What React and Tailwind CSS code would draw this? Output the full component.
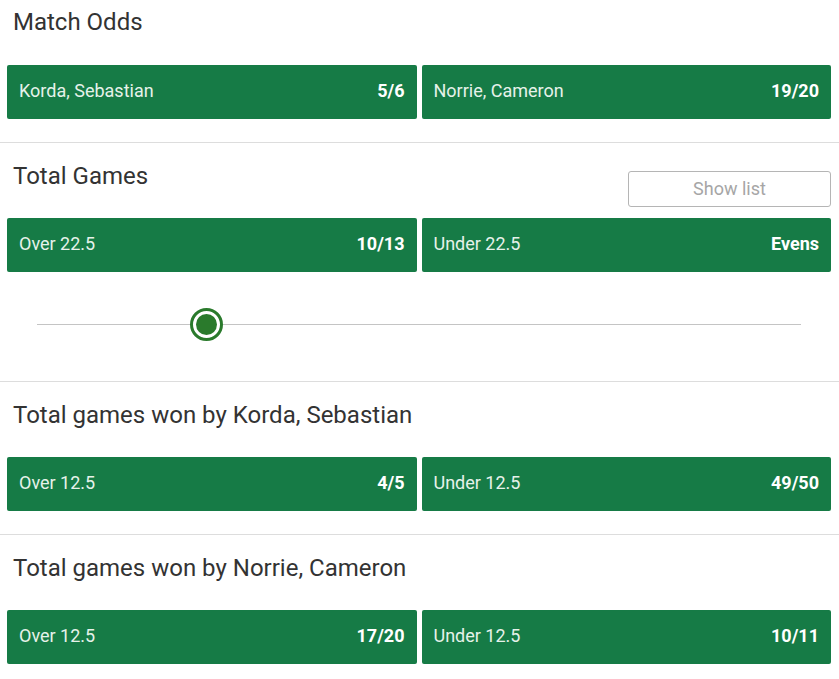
import React from "react";

const markets = [
  {
    title: "Match Odds",
    first: true,
    options: [
      { label: "Korda, Sebastian", odds: "5/6" },
      { label: "Norrie, Cameron", odds: "19/20" },
    ],
  },
  {
    title: "Total Games",
    showList: true,
    slider: true,
    options: [
      { label: "Over 22.5", odds: "10/13" },
      { label: "Under 22.5", odds: "Evens" },
    ],
  },
  {
    title: "Total games won by Korda, Sebastian",
    options: [
      { label: "Over 12.5", odds: "4/5" },
      { label: "Under 12.5", odds: "49/50" },
    ],
  },
  {
    title: "Total games won by Norrie, Cameron",
    last: true,
    options: [
      { label: "Over 12.5", odds: "17/20" },
      { label: "Under 12.5", odds: "10/11" },
    ],
  },
];

const OddsButton = ({ label, odds }) => (
  <button className="flex h-[54px] flex-1 items-center justify-between rounded-[2px] bg-[#167b46] pb-[3px] pl-3 pr-[12px] text-[18px]">
    <span className="text-[#e6f2ea]">{label}</span>
    <span className="font-bold text-white">{odds}</span>
  </button>
);

const Slider = () => (
  <div className="relative mx-[30px] mt-[36px] mb-[17px] h-[33px]">
    <div className="absolute left-0 right-0 top-[16px] h-px bg-[#c4c4c4]" />
    <div className="absolute left-[153px] top-0 flex h-[33px] w-[33px] items-center justify-center rounded-full border-[3px] border-[#2a7a2c] bg-white">
      <div className="h-[21px] w-[21px] rounded-full bg-[#2a7a2c]" />
    </div>
  </div>
);

const Market = ({ market }) => (
  <div
    className={
      "pl-[7px] pr-[8px] pb-[23px] " +
      (market.last ? "" : "border-b border-[#dddddd]")
    }
  >
    <div
      className={
        "flex items-start justify-between " +
        (market.first ? "h-[65px] pt-[7px]" : "h-[75px] pt-[18px]")
      }
    >
      <h2 className="pl-[6px] text-[24px] leading-[30px] text-[#333333]">
        {market.title}
      </h2>
      {market.showList && (
        <button className="mt-[10px] h-[36px] w-[203px] rounded-[3px] border border-[#b5b5b5] pb-[2px] text-[18px] text-[#a6a6a6]">
          Show list
        </button>
      )}
    </div>
    <div className="flex gap-[5px]">
      {market.options.map((o) => (
        <OddsButton key={o.label} label={o.label} odds={o.odds} />
      ))}
    </div>
    {market.slider && <Slider />}
  </div>
);

export default function App() {
  return (
    <div
      className="h-[679px] w-[839px] overflow-hidden bg-white"
      style={{ fontFamily: "Roboto, 'Liberation Sans', sans-serif" }}
    >
      {markets.map((m) => (
        <Market key={m.title} market={m} />
      ))}
    </div>
  );
}
